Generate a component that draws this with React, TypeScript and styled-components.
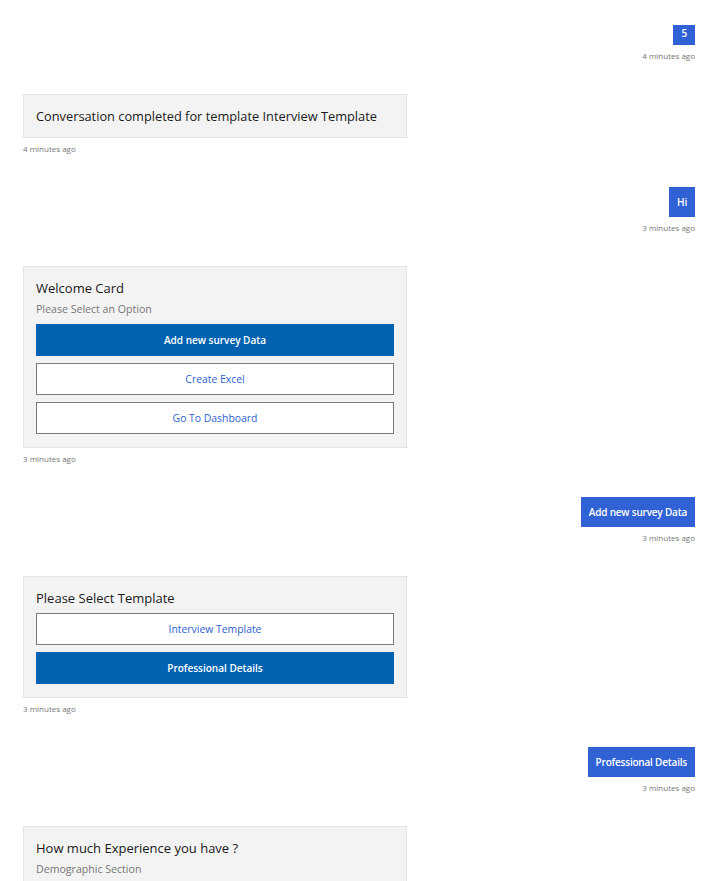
import React from 'react';
import styled, { createGlobalStyle } from 'styled-components';

type Action = { title: string; primary?: boolean };

type Activity =
    | { kind: 'user'; text: string; time: string; tight?: boolean }
    | { kind: 'text'; text: string; time: string }
    | { kind: 'card'; title: string; subtitle?: string; actions: Action[]; time: string };

const activities: Activity[] = [
    { kind: 'user', text: '5', time: '4 minutes ago', tight: true },
    { kind: 'text', text: 'Conversation completed for template Interview Template', time: '4 minutes ago' },
    { kind: 'user', text: 'Hi', time: '3 minutes ago' },
    {
        kind: 'card',
        title: 'Welcome Card',
        subtitle: 'Please Select an Option',
        actions: [
            { title: 'Add new survey Data', primary: true },
            { title: 'Create Excel' },
            { title: 'Go To Dashboard' },
        ],
        time: '3 minutes ago',
    },
    { kind: 'user', text: 'Add new survey Data', time: '3 minutes ago' },
    {
        kind: 'card',
        title: 'Please Select Template',
        actions: [
            { title: 'Interview Template' },
            { title: 'Professional Details', primary: true },
        ],
        time: '3 minutes ago',
    },
    { kind: 'user', text: 'Professional Details', time: '3 minutes ago' },
    {
        kind: 'card',
        title: 'How much Experience you have ?',
        subtitle: 'Demographic Section',
        actions: [],
        time: '',
    },
];

const App: React.FC = () => {
    return (
        <>
            <GlobalStyle />
            <Transcript>
                {activities.map((a, i) => {
                    if (a.kind === 'user') {
                        return (
                            <ActivityRow key={i} $side="right">
                                <UserBubble $tight={a.tight}>{a.text}</UserBubble>
                                <Timestamp>{a.time}</Timestamp>
                            </ActivityRow>
                        );
                    }
                    if (a.kind === 'text') {
                        return (
                            <ActivityRow key={i} $side="left">
                                <BotCard>
                                    <CardText $size={12.8}>{a.text}</CardText>
                                </BotCard>
                                <Timestamp>{a.time}</Timestamp>
                            </ActivityRow>
                        );
                    }
                    return (
                        <ActivityRow key={i} $side="left">
                            <BotCard>
                                <CardText>{a.title}</CardText>
                                {a.subtitle && <CardSubtitle>{a.subtitle}</CardSubtitle>}
                                {a.actions.length > 0 && (
                                    <ActionSet>
                                        {a.actions.map((act) => (
                                            <ActionButton key={act.title} $primary={act.primary}>
                                                {act.title}
                                            </ActionButton>
                                        ))}
                                    </ActionSet>
                                )}
                            </BotCard>
                            {a.time && <Timestamp>{a.time}</Timestamp>}
                        </ActivityRow>
                    );
                })}
            </Transcript>
        </>
    );
};

const GlobalStyle = createGlobalStyle`
    html, body {
        margin: 0;
        padding: 0;
        background: #ffffff;
        height: 881px;
        overflow: hidden;
    }
    body {
        font-family: "Open Sans", "Noto Sans", sans-serif;
    }
`;

const Transcript = styled.div`
    display: flex;
    flex-direction: column;
    gap: 32px;
    padding: 25px 25px 0 23px;
`;

const ActivityRow = styled.div<{ $side: 'left' | 'right' }>`
    display: flex;
    flex-direction: column;
    align-items: ${(p) => (p.$side === 'right' ? 'flex-end' : 'flex-start')};
`;

const UserBubble = styled.div<{ $tight?: boolean }>`
    background: #3062d6;
    color: #ffffff;
    font-size: 10px;
    font-weight: 600;
    letter-spacing: -0.2px;
    line-height: 14px;
    padding: ${(p) => (p.$tight ? '1px 8px 5px' : '8px 8px')};
`;

const BotCard = styled.div`
    width: 384px;
    box-sizing: border-box;
    background: #f3f3f3;
    border: 1px solid #e3e3e3;
    padding: 12px;
    display: flex;
    flex-direction: column;
`;

const CardText = styled.div<{ $size?: number }>`
    font-size: ${(p) => p.$size ?? 13}px;
    line-height: 18px;
    color: #1a1a1a;
`;

const CardSubtitle = styled.div`
    margin-top: 3px;
    font-size: 10.6px;
    line-height: 18px;
    color: #777777;
`;

const ActionSet = styled.div`
    margin: 6px 0 1px;
    display: flex;
    flex-direction: column;
    gap: 7px;
`;

const ActionButton = styled.button<{ $primary?: boolean }>`
    all: unset;
    box-sizing: border-box;
    height: 32px;
    display: flex;
    align-items: center;
    justify-content: center;
    font-family: "Open Sans", "Noto Sans", sans-serif;
    font-size: ${(p) => (p.$primary ? 10 : 10.4)}px;
    font-weight: ${(p) => (p.$primary ? 600 : 400)};
    color: ${(p) => (p.$primary ? '#ffffff' : '#2d5fd0')};
    background: ${(p) => (p.$primary ? '#0063b1' : '#ffffff')};
    border: 1px solid ${(p) => (p.$primary ? '#0063b1' : '#7a7a7a')};
    cursor: pointer;
`;

const Timestamp = styled.div`
    margin-top: 5px;
    font-size: 8px;
    line-height: 12px;
    color: #767676;
`;

export default App;
